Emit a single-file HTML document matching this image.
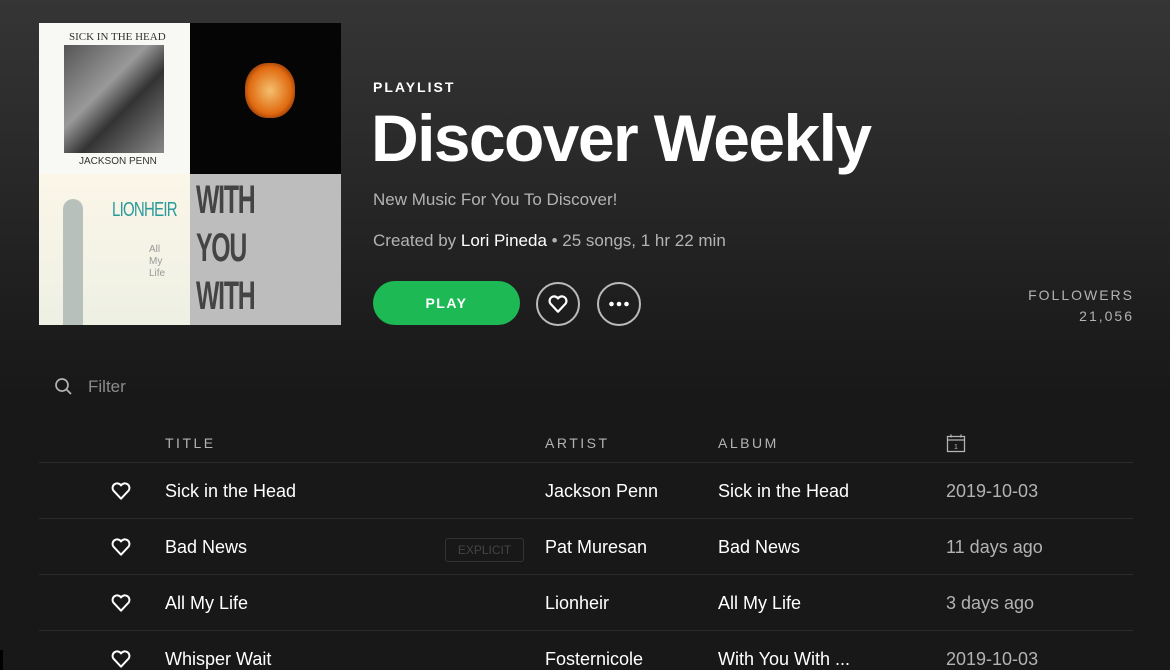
<!DOCTYPE html>
<html style="width:1170px;height:670px;overflow:hidden"><head><meta charset="utf-8"><style>
*{margin:0;padding:0;box-sizing:border-box}
body{width:1170px;height:670px;overflow:hidden;background:linear-gradient(#353535 0px,#2a2a2a 150px,#1c1c1c 330px,#181818 400px);font-family:"Liberation Sans",sans-serif;position:relative;color:#fff}
.a{position:absolute}
.art{left:39px;top:23px;width:302px;height:302px}
.q{position:absolute;width:151px;height:151px;overflow:hidden}
.lbl{font-size:14px;font-weight:bold;letter-spacing:2px;color:#fff}
.h{font-size:14px;letter-spacing:2.5px;color:#b3b3b3}
.row{position:absolute;left:39px;width:1094px;height:56px;border-top:1px solid #2b2b2b;font-size:18px;color:#fff;overflow:hidden}
.row span{position:absolute;top:18px;line-height:20px}
.row svg{position:absolute;left:71px;top:17px}
.d{color:#b3b3b3}
</style></head><body>
<div class="a" style="left:0;top:650px;width:3px;height:20px;background:#000"></div>
<div class="a art">
 <div class="q" style="left:0;top:0;background:#f8f8f4">
  <div class="a" style="left:25px;top:22px;width:100px;height:108px;background:linear-gradient(135deg,#555,#999 40%,#333 60%,#888)"></div>
  <div class="a" style="left:30px;top:8px;font-size:11px;color:#333;font-family:'Liberation Serif',serif">SICK IN THE HEAD</div>
  <div class="a" style="left:40px;top:133px;font-size:10px;color:#333">JACKSON PENN</div>
 </div>
 <div class="q" style="left:151px;top:0;background:#050505">
  <div class="a" style="left:55px;top:40px;width:50px;height:55px;border-radius:45%;background:radial-gradient(#f4c070,#e06a10 60%,#300 100%)"></div>
 </div>
 <div class="q" style="left:0;top:151px;background:linear-gradient(#fbf6e8,#eef0e4)">
  <div class="a" style="left:73px;top:25px;font-size:20px;color:#2a9a9a;letter-spacing:-1px;transform:scaleX(.75);transform-origin:left">LIONHEIR</div>
  <div class="a" style="left:110px;top:70px;font-size:10px;color:#999;line-height:12px">All<br>My<br>Life</div>
  <div class="a" style="left:24px;top:25px;width:20px;height:126px;border-radius:10px 10px 0 0;background:#b8c0bc"></div>
 </div>
 <div class="q" style="left:151px;top:151px;background:#bdbdbd">
  <div class="a" style="left:6px;top:2px;font-size:40px;font-weight:bold;line-height:48px;color:#444;letter-spacing:-2px;transform:scaleX(.62);transform-origin:left">WITH YOU<br>WITH YOU<br>WITH ME</div>
 </div>
</div>
<div class="a lbl" style="left:373px;top:79px">PLAYLIST</div>
<div class="a" style="left:371px;top:100px;font-size:66px;font-weight:bold;letter-spacing:-1.6px;line-height:76px">Discover Weekly</div>
<div class="a" style="left:373px;top:190px;font-size:17px;color:#b3b3b3">New Music For You To Discover!</div>
<div class="a" style="left:373px;top:231px;font-size:17px;color:#b3b3b3">Created by <b style="color:#fff;font-weight:normal">Lori Pineda</b> • 25 songs, 1 hr 22 min</div>
<div class="a" style="left:373px;top:281px;width:147px;height:44px;border-radius:22px;background:#1db954;text-align:center;line-height:44px;font-size:14px;font-weight:bold;letter-spacing:1.5px">PLAY</div>
<div class="a" style="left:536px;top:282px;width:44px;height:44px;border-radius:50%;border:2px solid #bbb"></div>
<svg class="a" style="left:547px;top:293px" width="22" height="22" viewBox="0 0 20 20"><path d="M10 17 L3 9.5 A4 4 0 0 1 10 5 A4 4 0 0 1 17 9.5 Z" fill="none" stroke="#fff" stroke-width="2" stroke-linejoin="round"/></svg>
<div class="a" style="left:597px;top:282px;width:44px;height:44px;border-radius:50%;border:2px solid #bbb"></div>
<svg class="a" style="left:597px;top:282px" width="44" height="44"><circle cx="14.5" cy="22" r="2.3" fill="#fff"/><circle cx="22" cy="22" r="2.3" fill="#fff"/><circle cx="29.5" cy="22" r="2.3" fill="#fff"/></svg>
<div class="a h" style="right:36px;top:285px;text-align:right;line-height:21px;letter-spacing:2px">FOLLOWERS<br>21,056</div>
<svg class="a" style="left:54px;top:377px" width="20" height="20"><circle cx="8" cy="8" r="6" fill="none" stroke="#b3b3b3" stroke-width="1.7"/><path d="M12.5 12.5 L17 17" stroke="#b3b3b3" stroke-width="1.8"/></svg>
<div class="a" style="left:88px;top:377px;font-size:17px;color:#8a8a8a">Filter</div>
<div class="a h" style="left:165px;top:435px">TITLE</div>
<div class="a h" style="left:545px;top:435px">ARTIST</div>
<div class="a h" style="left:718px;top:435px">ALBUM</div>
<svg class="a" style="left:946px;top:433px" width="20" height="20"><rect x="1.5" y="3.5" width="17" height="15" fill="none" stroke="#b3b3b3" stroke-width="1.3"/><path d="M1.5 7h17M5 1.5v3M15 1.5v3" stroke="#b3b3b3" stroke-width="1.3"/><text x="10" y="16" font-size="7" fill="#b3b3b3" text-anchor="middle" font-family="Liberation Sans">1</text></svg>

<div class="row" style="top:462px"><svg width="22" height="22" viewBox="0 0 20 20"><path d="M10 17 L3 9.5 A4 4 0 0 1 10 5 A4 4 0 0 1 17 9.5 Z" fill="none" stroke="#fff" stroke-width="1.8" stroke-linejoin="round"/></svg><span style="left:126px">Sick in the Head</span><span style="left:506px">Jackson Penn</span><span style="left:679px">Sick in the Head</span><span class="d" style="left:907px">2019-10-03</span></div>
<div class="row" style="top:518px"><svg width="22" height="22" viewBox="0 0 20 20"><path d="M10 17 L3 9.5 A4 4 0 0 1 10 5 A4 4 0 0 1 17 9.5 Z" fill="none" stroke="#fff" stroke-width="1.8" stroke-linejoin="round"/></svg><span style="left:126px">Bad News</span><span style="left:406px;top:19px;width:79px;height:24px;border:1px solid #333;border-radius:3px;font-size:12px;color:#444;text-align:center;line-height:22px">EXPLICIT</span><span style="left:506px">Pat Muresan</span><span style="left:679px">Bad News</span><span class="d" style="left:907px">11 days ago</span></div>
<div class="row" style="top:574px"><svg width="22" height="22" viewBox="0 0 20 20"><path d="M10 17 L3 9.5 A4 4 0 0 1 10 5 A4 4 0 0 1 17 9.5 Z" fill="none" stroke="#fff" stroke-width="1.8" stroke-linejoin="round"/></svg><span style="left:126px">All My Life</span><span style="left:506px">Lionheir</span><span style="left:679px">All My Life</span><span class="d" style="left:907px">3 days ago</span></div>
<div class="row" style="top:630px;height:40px"><svg width="22" height="22" viewBox="0 0 20 20"><path d="M10 17 L3 9.5 A4 4 0 0 1 10 5 A4 4 0 0 1 17 9.5 Z" fill="none" stroke="#fff" stroke-width="1.8" stroke-linejoin="round"/></svg><span style="left:126px">Whisper Wait</span><span style="left:506px">Fosternicole</span><span style="left:679px">With You With ...</span><span class="d" style="left:907px">2019-10-03</span></div>
</body></html>
